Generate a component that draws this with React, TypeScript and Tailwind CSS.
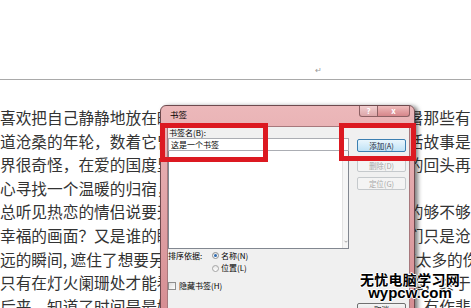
import React from 'react';

const cjk = "font-['Noto_Sans_CJK_SC',sans-serif]";

// document lines run under the dialog; only the ends show on either side
const lines: React.ReactNode[] = [
  '喜欢把自己静静地放在时光的河流里，看岁月流淌，细数着暑那些有',
  '道沧桑的年轮，数着它曾经走过的每一个春夏秋冬，那些鲜活故事是',
  '界很奇怪，在爱的国度里，我们总是在寻找，找到了却又不的回头再',
  '心寻找一个温暖的归宿，一个可以停靠的港湾。',
  '总听见热恋的情侣说要天长地久，可是谁又知道他们爱得真的够不够',
  '幸福的画面？又是谁的眼泪湿润了谁的眼眶，也许那时的他们只是沧',
  <>
    远的瞬间<span className="inline-block w-[0.5em]">,</span>遮住了想要另一半的视线，也遮住了那些藏在心底太多的伤
  </>,
  '只有在灯火阑珊处才能看见最真实的自己，原来幸福就在身边，终于',
  '后来，知道了时间是最好的良药，它会慢慢抚平所有的伤痛，有作悲',
];

function DialogButton({ label, kind }: { label: string; kind: 'default' | 'disabled' | 'normal' }) {
  const look =
    kind === 'default'
      ? 'border-[#3c7fb1] bg-gradient-to-b from-[#eaf6fd] to-[#bfe2f6] text-[#1b2a3a]'
      : kind === 'disabled'
        ? 'border-[#c5c9cc] bg-[#f4f4f4] text-[#a8a8a8]'
        : 'border-[#707070] bg-gradient-to-b from-[#f4f4f4] to-[#dcdcdc] text-black';
  return (
    <div className={`flex h-[13px] w-[49px] items-center justify-center rounded-[2px] border text-[7.5px] leading-none ${look}`}>
      {label}
    </div>
  );
}

function BookmarkDialog() {
  return (
    <div className="absolute left-[160px] top-[105px] h-[215px] w-[255px] rounded-t-[6px] border border-[#6e4a4e] bg-gradient-to-b from-[#ecb8ba] via-[#e0a2a6] to-[#d58c91] pl-[6px] pr-[4px] shadow-[3px_1px_4px_rgba(0,0,0,0.5)]">
      {/* title bar */}
      <div className="flex h-[20px] items-start justify-between">
        <span className="pl-[3px] pt-[3px] text-[8.5px] leading-[10px] text-black">书签</span>
        <div className="flex">
          <div className="flex h-[11px] w-[19px] items-center justify-center rounded-bl-[3px] border border-t-0 border-[#8c6063] bg-gradient-to-b from-[#f2cfd0] to-[#dca6a9] text-[8px] font-bold leading-none text-white">
            ?
          </div>
          <div className="flex h-[11px] w-[32px] items-center justify-center rounded-br-[3px] border border-l-0 border-t-0 border-[#8c6063] bg-gradient-to-b from-[#efbcbc] to-[#d6868a] text-[8px] font-bold leading-none text-white">
            x
          </div>
        </div>
      </div>

      {/* client area */}
      <div className="flex h-[200px] border border-[#a7787c] bg-[#f0f0f0] text-[8px] text-black">
        <div className="w-[181px]">
          <div className="h-[11px] pl-[1px] leading-[11px]">书签名(B):</div>
          <div className="h-[13px] border border-[#abadb3] bg-white pl-[2px] leading-[11px]">这是一个书签</div>
          <div className="flex h-[98px] border border-t-0 border-[#828790] bg-white">
            <div className="flex-1" />
            <div className="flex w-[6px] flex-col justify-end border-l border-[#e3e3e3] bg-[#f6f6f6] pb-[5px]">
              <svg viewBox="0 0 6 4" className="h-[3px] w-[6px]">
                <path d="M1 1 L3 3 L5 1" fill="none" stroke="#8a8a8a" strokeWidth="1" />
              </svg>
            </div>
          </div>
          <div className="flex">
            <div className="w-[44px] pt-[1px] leading-[12px]">排序依据:</div>
            <div className="flex flex-col">
              <div className="flex h-[13px] items-center gap-[2px]">
                <span className="flex h-[7px] w-[7px] items-center justify-center rounded-full border border-[#8e8f8f] bg-gradient-to-b from-[#e6e6e6] to-white">
                  <span className="h-[3px] w-[3px] rounded-full bg-[#2f6bb0]" />
                </span>
                <span className="leading-none">名称(N)</span>
              </div>
              <div className="flex h-[12px] items-center gap-[2px]">
                <span className="h-[7px] w-[7px] rounded-full border border-[#a5a5a5] bg-gradient-to-b from-[#e6e6e6] to-white" />
                <span className="leading-none">位置(L)</span>
              </div>
            </div>
          </div>
          <div className="mt-[6px] flex h-[12px] items-center gap-[3px]">
            <span className="h-[8px] w-[8px] border border-[#8f8f8f] bg-gradient-to-br from-[#dcdcdc] to-white" />
            <span className="leading-none">隐藏书签(H)</span>
          </div>
        </div>

        <div className="ml-[8px] flex flex-col pt-[12px]">
          <DialogButton label="添加(A)" kind="default" />
          <div className="mt-[7px]">
            <DialogButton label="删除(D)" kind="disabled" />
          </div>
          <div className="mt-[5px]">
            <DialogButton label="定位(G)" kind="disabled" />
          </div>
          <div className="mt-[113px]">
            <DialogButton label="取消" kind="normal" />
          </div>
        </div>
      </div>
    </div>
  );
}

export default function App() {
  return (
    <div className={`relative h-[308px] w-[471px] overflow-hidden bg-white ${cjk}`}>
      {/* header area */}
      <div className="flex h-[80px] items-end border-b border-[#a9a9a9] pb-[5px] pl-[315px]">
        <span className="text-[8px] leading-none text-[#9a9a9a]">↵</span>
      </div>

      <div className="whitespace-nowrap pt-[26px] text-[15.7px] leading-[23.6px] text-[#333]">
        {lines.map((line, i) => (
          <p key={i}>{line}</p>
        ))}
      </div>

      <BookmarkDialog />

      {/* red annotation boxes */}
      <div className="absolute left-[160px] top-[123px] h-[39px] w-[108px] border-[5px] border-[#dc1921]" />
      <div className="absolute left-[339px] top-[123px] h-[38px] w-[77px] border-[5px] border-[#dc1921]" />

      {/* watermark */}
      <div className="absolute left-[358px] top-[272px] flex w-[104px] flex-col items-center font-bold text-black [text-shadow:1px_0_0_#fff,-1px_0_0_#fff,0_1px_0_#fff,0_-1px_0_#fff]">
        <span className="text-[14px] leading-[15px] tracking-[0.3px]">无忧电脑学习网</span>
        <span className="font-['Liberation_Sans',Arial,sans-serif] text-[15px] leading-[11px]">wypcw.com</span>
      </div>
    </div>
  );
}
